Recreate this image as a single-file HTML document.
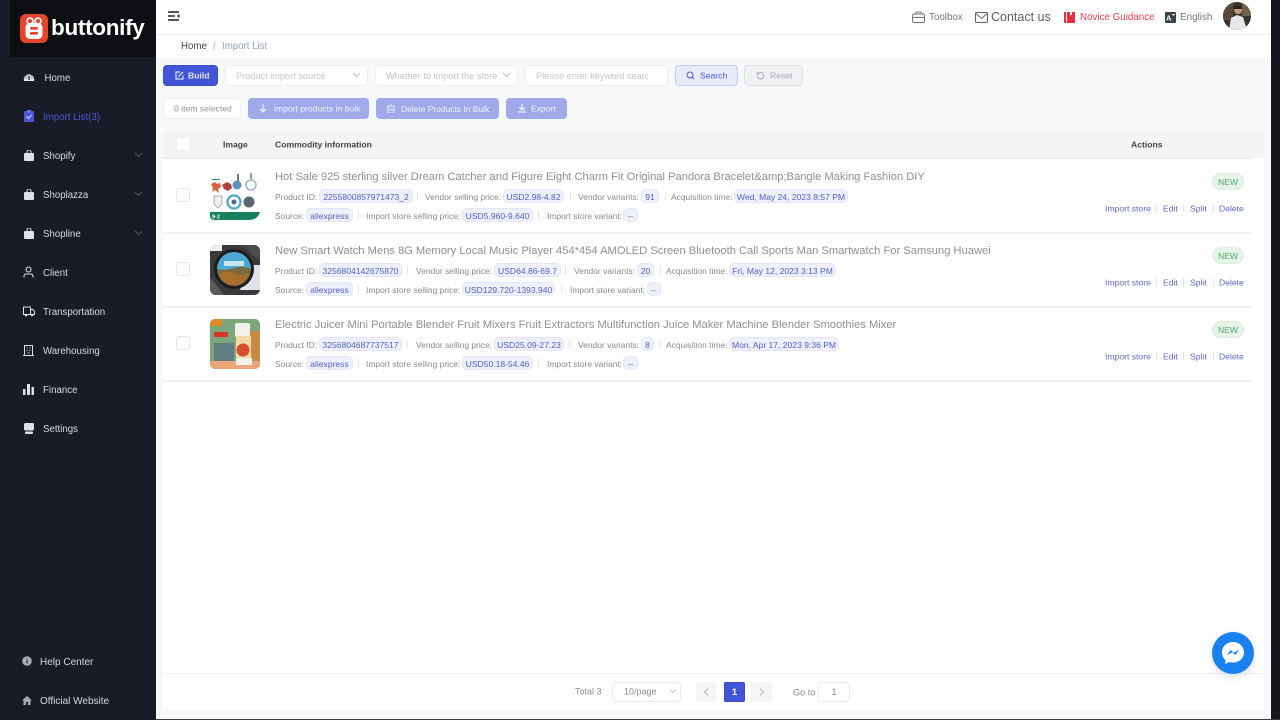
<!DOCTYPE html>
<html lang="en"><head><meta charset="utf-8"><title>Import List</title>
<style>
*{box-sizing:border-box;margin:0;padding:0}
html,body{width:1280px;height:720px;overflow:hidden;background:#f7f8f9;font-family:"Liberation Sans",Arial,sans-serif}
#r{position:relative;width:1280px;height:720px;overflow:hidden;filter:blur(.3px)}
.a{position:absolute}
.t{position:absolute;white-space:nowrap;transform:translateY(-50%);line-height:1}
.m2{font-size:8.45px;color:#8b8b8b;margin-top:.5px}
.tag{position:absolute;white-space:nowrap;height:14.5px;margin-top:-.5px;line-height:14px;font-size:8.55px;color:#5560cc;background:#eef0fc;border:1px solid #e3e6f9;border-radius:5px;text-align:center}
.sep{position:absolute;width:1px;height:8px;background:#e4e6ea}
.title{position:absolute;white-space:nowrap;font-size:11.17px;color:#909090;line-height:14px;margin-top:1px}
.box{position:absolute;width:14px;height:14px;background:#fff;border:1px solid #e4e6ea;border-radius:3px}
.new{position:absolute;left:1212px;width:32px;height:17px;line-height:16px;border-radius:9px;background:#e6f4e8;border:1px solid #deefe1;color:#4fa56a;font-size:8.6px;text-align:center}
.act{font-size:8.6px;color:#6069cf}
.btn{position:absolute;height:21px;border-radius:4px;color:#fff;font-size:8.6px;line-height:21px;white-space:nowrap}
.inp{position:absolute;top:65px;height:21px;background:#fff;border:1px solid #eceef0;border-radius:5px;font-size:9.2px;color:#c3c6cc;line-height:20px;padding-left:10px;white-space:nowrap;overflow:hidden}
.menu{font-size:9.7px;color:#d7d9de;margin-top:2px}
.menu.b{font-size:10px}
svg{position:absolute;display:block}
</style></head><body><div id="r">

<!-- sidebar -->
<div class="a" style="left:0;top:0;width:156px;height:720px;background:#191b26"></div>
<div class="a" style="left:10px;top:0;width:146px;height:57px;background:#0f0f13"></div>
<svg style="left:20px;top:14px" width="28" height="29" viewBox="0 0 28 29"><rect width="28" height="29" rx="6" fill="#e5452b"/><circle cx="10" cy="7" r="3" fill="none" stroke="#fff" stroke-width="1.6"/><circle cx="18" cy="7" r="3" fill="none" stroke="#fff" stroke-width="1.6"/><rect x="5.5" y="9" width="17" height="16" rx="4.5" fill="#fff"/><rect x="10" y="13" width="8" height="2.6" rx="1" fill="#e5452b"/><rect x="10" y="18" width="8" height="2.6" rx="1" fill="#e5452b"/></svg>
<div class="t" style="left:51px;top:28px;font-size:22.5px;font-weight:bold;color:#fff;letter-spacing:-.3px">buttonify</div>

<svg style="left:23px;top:72px" width="12" height="10" viewBox="0 0 12 10"><path d="M1 9A5.2 5.2 0 1 1 11 9Z" fill="#e4e6ea"/><path d="M6 8V4" stroke="#191b26" stroke-width="1.3"/><path d="M2.5 6h1M8.5 6h1M3.5 3.5l.6.6M8.5 3.5l-.6.6" stroke="#191b26"/></svg>
<div class="t menu" style="left:44.5px;top:77px">Home</div>
<svg style="left:24px;top:110px" width="10" height="12" viewBox="0 0 10 12"><rect y="1" width="10" height="11" rx="1" fill="#4a55d8"/><rect x="3" width="4" height="2.5" fill="#6a75e8"/><path d="M2.5 6.5l2 2 3-3.5" stroke="#d8dcfa" fill="none"/></svg>
<div class="t menu" style="left:43px;top:116px;color:#4a57d6">Import List(3)</div>

<svg style="left:24px;top:150px" width="10" height="11" viewBox="0 0 10 11"><rect y="3" width="10" height="8" rx="1" fill="#dfe1e6"/><path d="M3 4V2a2 2 0 0 1 4 0v2" fill="none" stroke="#dfe1e6"/></svg>
<div class="t menu" style="left:43px;top:155px">Shopify</div>
<svg style="left:134px;top:152px" width="9" height="6" viewBox="0 0 9 6"><path d="M1 1l3.5 3.5L8 1" fill="none" stroke="#50535f"/></svg>
<svg style="left:24px;top:189px" width="10" height="11" viewBox="0 0 10 11"><rect y="3" width="10" height="8" rx="1" fill="#dfe1e6"/><path d="M3 4V2a2 2 0 0 1 4 0v2" fill="none" stroke="#dfe1e6"/></svg>
<div class="t menu" style="left:43px;top:194px">Shoplazza</div>
<svg style="left:134px;top:191px" width="9" height="6" viewBox="0 0 9 6"><path d="M1 1l3.5 3.5L8 1" fill="none" stroke="#50535f"/></svg>
<svg style="left:24px;top:228px" width="10" height="11" viewBox="0 0 10 11"><rect y="3" width="10" height="8" rx="1" fill="#dfe1e6"/><path d="M3 4V2a2 2 0 0 1 4 0v2" fill="none" stroke="#dfe1e6"/></svg>
<div class="t menu" style="left:43px;top:233px">Shopline</div>
<svg style="left:134px;top:230px" width="9" height="6" viewBox="0 0 9 6"><path d="M1 1l3.5 3.5L8 1" fill="none" stroke="#50535f"/></svg>
<svg style="left:23px;top:266px" width="11" height="12" viewBox="0 0 11 12"><circle cx="5.5" cy="3.5" r="2.5" fill="none" stroke="#dfe1e6" stroke-width="1.1"/><path d="M1 11.5V10a2 2 0 0 1 2-2h5a2 2 0 0 1 2 2v1.5" fill="none" stroke="#dfe1e6" stroke-width="1.1"/></svg>
<div class="t menu" style="left:43px;top:272px">Client</div>
<svg style="left:23px;top:306px" width="12" height="11" viewBox="0 0 12 11"><path d="M.5 1h7v7.5H.5zM7.5 3.5H10l1.500 2v3h-4" fill="none" stroke="#dfe1e6"/><circle cx="3" cy="9" r="1.3" fill="#dfe1e6"/><circle cx="9" cy="9" r="1.3" fill="#dfe1e6"/></svg>
<div class="t menu" style="left:43px;top:311px">Transportation</div>
<svg style="left:23px;top:345px" width="11" height="11" viewBox="0 0 11 11"><path d="M1.5.5h8v10h-8zM0 10.5h11M3.5 3h1M6.5 3h1M3.5 5.5h1M6.5 5.5h1M4.5 8h2" fill="none" stroke="#dfe1e6"/></svg>
<div class="t menu" style="left:43px;top:350px">Warehousing</div>
<svg style="left:23px;top:384px" width="11" height="11" viewBox="0 0 11 11"><rect y="5" width="2.5" height="6" fill="#dfe1e6"/><rect x="4" width="3" height="11" fill="#dfe1e6"/><rect x="8.5" y="3" width="2.500" height="8" fill="#dfe1e6"/></svg>
<div class="t menu" style="left:43px;top:389px">Finance</div>
<svg style="left:24px;top:423px" width="10" height="11" viewBox="0 0 10 11"><rect width="10" height="7.5" rx="1.5" fill="#dfe1e6"/><rect x="1" y="8.5" width="8" height="2.5" rx="1" fill="#dfe1e6"/></svg>
<div class="t menu" style="left:43px;top:428px">Settings</div>

<svg style="left:22px;top:656px" width="10" height="10" viewBox="0 0 10 10"><circle cx="5" cy="5" r="4.800" fill="#a9acb3"/><path d="M5 4v3.500M5 2.200v1" stroke="#191b26" stroke-width="1.100"/></svg>
<div class="t menu b" style="left:40px;top:661px">Help Center</div>
<svg style="left:22px;top:696px" width="10" height="9" viewBox="0 0 10 9"><path d="M5 0L0 4.500h1.500V9h2.500V6h2v3h2.500V4.500H10z" fill="#a9acb3"/></svg>
<div class="t menu b" style="left:40px;top:700px">Official Website</div>

<!-- right frame -->
<div class="a" style="left:1271px;top:0;width:9px;height:720px;background:#17181f"></div>
<div class="a" style="left:156px;top:719px;width:1124px;height:1px;background:#3a3b40"></div>

<!-- header -->
<div class="a" style="left:156px;top:0;width:1115px;height:34px;background:#fff"></div>
<div class="a" style="left:156px;top:34px;width:1115px;height:1px;background:#eceef0"></div>
<div class="a" style="left:156px;top:35px;width:1115px;height:22px;background:#fff"></div>
<svg style="left:168px;top:11px" width="12" height="11" viewBox="0 0 12 11"><path d="M0 1h11M0 5h7M0 9h11" stroke="#222" stroke-width="1.4"/><path d="M11.500 3.200L8.800 5l2.700 1.800z" fill="#222"/></svg>
<svg style="left:912px;top:11px" width="13" height="12" viewBox="0 0 13 12"><rect x=".5" y="3" width="12" height="8.500" rx="1.500" fill="none" stroke="#777"/><path d="M4 3V1h5v2M.5 6.500h12" fill="none" stroke="#777"/></svg>
<div class="t" style="left:929px;top:18px;font-size:9.8px;color:#777">Toolbox</div>
<svg style="left:975px;top:12px" width="13" height="11" viewBox="0 0 13 11"><rect x=".5" y=".5" width="12" height="10" rx="1" fill="none" stroke="#666"/><path d="M1 1.500l5.500 5 5.500-5" fill="none" stroke="#666"/></svg>
<div class="t" style="left:991px;top:17px;font-size:12.5px;color:#606060">Contact us</div>
<svg style="left:1064px;top:12px" width="11" height="11" viewBox="0 0 11 11"><rect width="2" height="11" fill="#e8313f"/><path d="M3 0h3v3h2V0h3v11H3z" fill="#e8313f"/></svg>
<div class="t" style="left:1080px;top:18px;font-size:9.8px;color:#e9424f">Novice Guidance</div>
<svg style="left:1165px;top:12px" width="11" height="11" viewBox="0 0 11 11"><rect width="11" height="11" rx="1" fill="#3d4148"/><text x="1" y="8.500" font-size="7.500" font-weight="bold" fill="#fff" font-family="Liberation Sans">A</text><path d="M7 2.500h3M8.500 2v2" stroke="#fff" stroke-width=".7"/></svg>
<div class="t" style="left:1180px;top:18px;font-size:9.9px;color:#777">English</div>
<svg style="left:1223px;top:2px" width="28" height="28" viewBox="0 0 28 28"><defs><clipPath id="c"><circle cx="14" cy="14" r="14"/></clipPath></defs><g clip-path="url(#c)"><rect width="28" height="28" fill="#3a342e"/><rect width="10" height="18" fill="#57493a"/><rect x="19" y="0" width="9" height="14" fill="#6e5f4f"/><circle cx="15" cy="8" r="4" fill="#c99a7c"/><path d="M14 4a4 3 0 0 1 5 3l-8 0a4 3 0 0 1 3-3z" fill="#2a2018"/><path d="M6 28l2-12 6-3 6 2 4 13z" fill="#e6e6e8"/></g></svg>

<div class="t" style="left:181px;top:46.5px;font-size:9.7px;color:#444">Home</div>
<div class="t" style="left:213px;top:46.5px;font-size:9.7px;color:#aeb2b8">/</div>
<div class="t" style="left:222px;top:46.5px;font-size:9.7px;color:#93a6be">Import List</div>

<!-- filters -->
<div class="btn" style="left:163px;top:65px;width:55px;background:#4255d6;border:1px solid #3a4cc8"><span class="t" style="left:24px;top:10px;font-weight:bold;font-size:8.6px;color:#e3e6fb">Build</span><svg style="left:11px;top:5px" width="9" height="9" viewBox="0 0 9 9"><path d="M5 1H1v7h7V4.500" fill="none" stroke="#fff"/><path d="M3.500 5.500L8 1" stroke="#fff"/></svg></div>
<div class="inp" style="left:225px;width:143px">Product import source</div>
<svg style="left:352px;top:72px" width="9" height="6" viewBox="0 0 9 6"><path d="M1 1l3.500 3.500L8 1" fill="none" stroke="#b9bcc2"/></svg>
<div class="inp" style="left:375px;width:143px">Whether to import the store</div>
<svg style="left:502px;top:72px" width="9" height="6" viewBox="0 0 9 6"><path d="M1 1l3.500 3.500L8 1" fill="none" stroke="#b9bcc2"/></svg>
<div class="inp" style="left:525px;width:143px;"><span style="display:block;width:112px;overflow:hidden">Please enter keyword search</span></div>
<div class="btn" style="left:675px;top:65px;width:63px;background:#e8ebfb;border:1px solid #c3c9f3"><span class="t" style="left:24px;top:10px;color:#4a58d0">Search</span><svg style="left:10px;top:5px" width="9" height="9" viewBox="0 0 9 9"><circle cx="4" cy="4" r="3" fill="none" stroke="#4a58d0"/><path d="M6.300 6.300L8 8" stroke="#4a58d0"/></svg></div>
<div class="btn" style="left:744px;top:65px;width:59px;background:#f0f1f2;border:1px solid #dfe1e4"><span class="t" style="left:25px;top:10px;color:#a8abb0">Reset</span><svg style="left:11px;top:5px" width="9" height="9" viewBox="0 0 9 9"><path d="M2 2.500A3.300 3.300 0 1 1 1.200 5" fill="none" stroke="#a8abb0"/><path d="M1 1v2.200h2.200" fill="none" stroke="#a8abb0"/></svg></div>

<div class="a" style="left:163px;top:98px;width:78px;height:21px;background:#fff;border:1px solid #eceef0;border-radius:5px"></div>
<div class="t m2" style="left:174px;top:108.5px;color:#909399;font-size:8.6px">0 item selected</div>
<div class="btn" style="left:248px;top:98px;width:121px;background:#a1a9ea"><svg style="left:11px;top:6px" width="8" height="9" viewBox="0 0 8 9"><path d="M4 0v8M1 5l3 3 3-3" fill="none" stroke="#fff"/></svg><span class="t" style="left:26px;top:10.5px;color:#f3f4fd">import products in bulk</span></div>
<div class="btn" style="left:376px;top:98px;width:123px;background:#a1a9ea"><svg style="left:11px;top:6px" width="8" height="9" viewBox="0 0 8 9"><path d="M1 2h6v7H1zM0 2h8M3 0h2M3 4v3M5 4v3" fill="none" stroke="#fff" stroke-width=".8"/></svg><span class="t" style="left:25px;top:10.5px;color:#f3f4fd;font-size:8.45px">Delete Products In Bulk</span></div>
<div class="btn" style="left:506px;top:98px;width:61px;background:#a1a9ea"><svg style="left:12px;top:6px" width="8" height="9" viewBox="0 0 8 9"><path d="M4 0v5.500M1.500 3.500L4 6l2.500-2.500M0 8h8" fill="none" stroke="#fff"/></svg><span class="t" style="left:25px;top:10.5px;color:#f3f4fd">Export</span></div>

<!-- table -->
<div class="a" style="left:163px;top:130px;width:1101px;height:580px;background:#fff"></div>
<div class="a" style="left:163px;top:130px;width:1101px;height:28px;background:#f3f4f6;border-radius:4px 4px 0 0"></div>
<div class="a" style="left:163px;top:158px;width:1089px;height:1px;background:#e9ebee"></div>
<div class="box" style="left:176px;top:137px;border-color:#eceef0"></div>
<div class="t" style="left:223px;top:144.5px;font-size:8.6px;font-weight:bold;color:#444">Image</div>
<div class="t" style="left:275px;top:144.5px;font-size:8.6px;font-weight:bold;color:#444">Commodity information</div>
<div class="t" style="left:1131px;top:144.5px;font-size:8.6px;font-weight:bold;color:#444">Actions</div>

<div class="a" style="left:163px;top:232px;width:1089px;height:2px;background:#f1f2f4"></div>
<div class="a" style="left:163px;top:306px;width:1089px;height:2px;background:#f1f2f4"></div>
<div class="a" style="left:163px;top:380px;width:1089px;height:2px;background:#f1f2f4"></div>

<!-- row 1 -->
<div class="box" style="left:176px;top:188px"></div>
<svg style="left:210px;top:171px" width="50" height="50" viewBox="0 0 50 50"><rect width="50" height="50" fill="#fff"/><path d="M2 8h8v1H2z" fill="#3b8e6b"/><path d="M1 13l4-2 2 2 3-1 1 4-3 2 1 4-4-3-3 2 1-4z" fill="#d9603c"/><path d="M12 14l5-3 4 2 1 4-4 3-4-2z" fill="#b43f3a"/><path d="M27 3h2v7h-2z" fill="#777"/><circle cx="27" cy="14" r="4.500" fill="#5a93c4"/><path d="M40 2h2v6h-2z" fill="#999"/><circle cx="41" cy="14" r="5" fill="#fff" stroke="#a8b0b8" stroke-width="1.500"/><path d="M4 25h8v8l-4 4-4-4z" fill="#eee" stroke="#999" stroke-width=".8"/><circle cx="24" cy="31" r="6.500" fill="#fff" stroke="#4ba4cc" stroke-width="2.200"/><circle cx="24" cy="31" r="2.500" fill="#3e6f8f"/><circle cx="39" cy="31" r="5.500" fill="#5b6672"/><path d="M0 41h50q-2 8-12 8H5q-5 0-5-4z" fill="#188060"/><text x="2" y="47.500" font-size="5.500" font-weight="bold" fill="#fff" font-family="Liberation Sans">9·2</text></svg>
<div class="title" style="left:275px;top:169px">Hot Sale 925 sterling silver Dream Catcher and Figure Eight Charm Fit Original Pandora Bracelet&amp;amp;Bangle Making Fashion DIY</div>
<div class="t m2" style="left:275px;top:196px">Product ID:</div>
<div class="tag" style="left:319px;top:189px;width:94px">2255800857971473_2</div>
<div class="sep" style="left:417px;top:192px"></div>
<div class="t m2" style="left:425px;top:196px">Vendor selling price:</div>
<div class="tag" style="left:503px;top:189px;width:61px">USD2.98-4.82</div>
<div class="sep" style="left:570px;top:192px"></div>
<div class="t m2" style="left:578px;top:196px">Vendor variants:</div>
<div class="tag" style="left:641px;top:189px;width:18px">91</div>
<div class="sep" style="left:665px;top:192px"></div>
<div class="t m2" style="left:671px;top:196px">Acquisition time:</div>
<div class="tag" style="left:734px;top:189px;width:114px">Wed, May 24, 2023 8:57 PM</div>
<div class="t m2" style="left:275px;top:215.5px">Source:</div>
<div class="tag" style="left:306px;top:208px;width:47px">aliexpress</div>
<div class="sep" style="left:358px;top:211px"></div>
<div class="t m2" style="left:366px;top:215.5px">Import store selling price:</div>
<div class="tag" style="left:462px;top:208px;width:71px">USD5.960-9.640</div>
<div class="sep" style="left:538px;top:211px"></div>
<div class="t m2" style="left:547px;top:215.5px">Import store variant:</div>
<div class="tag" style="left:623px;top:208px;width:15px">--</div>
<div class="new" style="top:173px">NEW</div>
<div class="t act" style="left:1105px;top:208.5px">Import store</div><div class="sep" style="left:1156px;top:204px"></div>
<div class="t act" style="left:1163px;top:208.5px">Edit</div><div class="sep" style="left:1183px;top:204px"></div>
<div class="t act" style="left:1190px;top:208.5px">Split</div><div class="sep" style="left:1213px;top:204px"></div>
<div class="t act" style="left:1219px;top:208.5px">Delete</div>

<!-- row 2 -->
<div class="box" style="left:176px;top:262px"></div>
<svg style="left:210px;top:245px" width="50" height="50" viewBox="0 0 50 50"><defs><clipPath id="c2"><rect width="50" height="50" rx="6"/></clipPath></defs><g clip-path="url(#c2)"><rect width="50" height="50" fill="#3a3a3c"/><path d="M0 0h12v6H0z" fill="#eee"/><path d="M32 0h18v16z" fill="#4a4a4d"/><path d="M38 20h12v25H30z" fill="#dde3ea"/><path d="M0 32l14 18H0z" fill="#5c5c5e"/><circle cx="24" cy="24" r="20" fill="#1c1c1e"/><circle cx="24" cy="24" r="17" fill="#7d6a3f"/><path d="M7 24A17 17 0 0 1 41 24q-8-4-17-1t-17 1z" fill="#4aa8d4"/><path d="M14 16h20v5H14z" fill="#c8e6f2"/><path d="M9 30q8-6 15-2t15 0q-5 12-15 12T9 30z" fill="#a86f2c"/></g></svg>
<div class="title" style="left:275px;top:243px">New Smart Watch Mens 8G Memory Local Music Player 454*454 AMOLED Screen Bluetooth Call Sports Man Smartwatch For Samsung Huawei</div>
<div class="t m2" style="left:275px;top:270px">Product ID:</div>
<div class="tag" style="left:319px;top:263px;width:83px">3256804142675870</div>
<div class="sep" style="left:407px;top:266px"></div>
<div class="t m2" style="left:416px;top:270px">Vendor selling price:</div>
<div class="tag" style="left:494px;top:263px;width:67px">USD64.86-69.7</div>
<div class="sep" style="left:565px;top:266px"></div>
<div class="t m2" style="left:574px;top:270px">Vendor variants:</div>
<div class="tag" style="left:637px;top:263px;width:17px">20</div>
<div class="sep" style="left:660px;top:266px"></div>
<div class="t m2" style="left:666px;top:270px">Acquisition time:</div>
<div class="tag" style="left:729px;top:263px;width:107px">Fri, May 12, 2023 3:13 PM</div>
<div class="t m2" style="left:275px;top:289.5px">Source:</div>
<div class="tag" style="left:306px;top:282px;width:47px">aliexpress</div>
<div class="sep" style="left:358px;top:285px"></div>
<div class="t m2" style="left:366px;top:289.5px">Import store selling price:</div>
<div class="tag" style="left:462px;top:282px;width:93px">USD129.720-1393.940</div>
<div class="sep" style="left:561px;top:285px"></div>
<div class="t m2" style="left:570px;top:289.5px">Import store variant:</div>
<div class="tag" style="left:647px;top:282px;width:14px">--</div>
<div class="new" style="top:247px">NEW</div>
<div class="t act" style="left:1105px;top:282.5px">Import store</div><div class="sep" style="left:1156px;top:278px"></div>
<div class="t act" style="left:1163px;top:282.5px">Edit</div><div class="sep" style="left:1183px;top:278px"></div>
<div class="t act" style="left:1190px;top:282.5px">Split</div><div class="sep" style="left:1213px;top:278px"></div>
<div class="t act" style="left:1219px;top:282.5px">Delete</div>

<!-- row 3 -->
<div class="box" style="left:176px;top:336px"></div>
<svg style="left:210px;top:319px" width="50" height="50" viewBox="0 0 50 50"><defs><clipPath id="c3"><rect width="50" height="50" rx="5"/></clipPath></defs><g clip-path="url(#c3)"><rect width="50" height="50" fill="#7ea67d"/><path d="M38 12h12v30H38z" fill="#c88a45"/><path d="M0 0h12v7H0z" fill="#e08a2a"/><rect x="4" y="13" width="14" height="5" fill="#d9322c"/><rect x="4" y="24" width="20" height="18" fill="#5f7d82"/><path d="M0 42h50v8H0z" fill="#e9a77a"/><rect x="25" y="4" width="15" height="14" rx="2" fill="#f2f0ea"/><rect x="26" y="17" width="15" height="22" fill="#f3d9a6"/><circle cx="33" cy="31" r="6.500" fill="#d8502b"/><rect x="26" y="39" width="16" height="7" fill="#f4f2ee"/></g></svg>
<div class="title" style="left:275px;top:317px">Electric Juicer Mini Portable Blender Fruit Mixers Fruit Extractors Multifunction Juice Maker Machine Blender Smoothies Mixer</div>
<div class="t m2" style="left:275px;top:344px">Product ID:</div>
<div class="tag" style="left:319px;top:337px;width:83px">3256804687737517</div>
<div class="sep" style="left:407px;top:340px"></div>
<div class="t m2" style="left:416px;top:344px">Vendor selling price:</div>
<div class="tag" style="left:494px;top:337px;width:70px">USD25.09-27.23</div>
<div class="sep" style="left:569px;top:340px"></div>
<div class="t m2" style="left:578px;top:344px">Vendor variants:</div>
<div class="tag" style="left:641px;top:337px;width:13px">8</div>
<div class="sep" style="left:660px;top:340px"></div>
<div class="t m2" style="left:666px;top:344px">Acquisition time:</div>
<div class="tag" style="left:729px;top:337px;width:110px">Mon, Apr 17, 2023 9:36 PM</div>
<div class="t m2" style="left:275px;top:363.5px">Source:</div>
<div class="tag" style="left:306px;top:356px;width:47px">aliexpress</div>
<div class="sep" style="left:358px;top:359px"></div>
<div class="t m2" style="left:366px;top:363.5px">Import store selling price:</div>
<div class="tag" style="left:462px;top:356px;width:71px">USD50.18-54.46</div>
<div class="sep" style="left:538px;top:359px"></div>
<div class="t m2" style="left:547px;top:363.5px">Import store variant:</div>
<div class="tag" style="left:623px;top:356px;width:15px">--</div>
<div class="new" style="top:321px">NEW</div>
<div class="t act" style="left:1105px;top:356.5px">Import store</div><div class="sep" style="left:1156px;top:352px"></div>
<div class="t act" style="left:1163px;top:356.5px">Edit</div><div class="sep" style="left:1183px;top:352px"></div>
<div class="t act" style="left:1190px;top:356.5px">Split</div><div class="sep" style="left:1213px;top:352px"></div>
<div class="t act" style="left:1219px;top:356.5px">Delete</div>

<!-- pagination -->
<div class="a" style="left:163px;top:673px;width:1101px;height:1px;background:#eef0f2"></div>
<div class="t" style="left:575px;top:692px;font-size:9px;color:#8b8b8b">Total 3</div>
<div class="a" style="left:612px;top:682px;width:69px;height:20px;background:#fff;border:1px solid #e8eaed;border-radius:5px"></div>
<div class="t" style="left:624px;top:692px;font-size:9px;color:#8b8b8b">10/page</div>
<svg style="left:669px;top:689px" width="8" height="5" viewBox="0 0 8 5"><path d="M1 .5l3 3 3-3" fill="none" stroke="#c3c6cc"/></svg>
<div class="a" style="left:696px;top:682px;width:20px;height:20px;background:#f5f5f5;border-radius:2px"></div>
<svg style="left:703px;top:688px" width="6" height="8" viewBox="0 0 6 8"><path d="M5 .5L1.500 4 5 7.500" fill="none" stroke="#b5b8bd"/></svg>
<div class="a" style="left:724px;top:682px;width:21px;height:20px;background:#4255d6;border:1px solid #3a4cc8;border-radius:2px;color:#fff;font-size:9.5px;font-weight:bold;text-align:center;line-height:19px">1</div>
<div class="a" style="left:751px;top:682px;width:21px;height:20px;background:#f5f5f5;border-radius:2px"></div>
<svg style="left:759px;top:688px" width="6" height="8" viewBox="0 0 6 8"><path d="M1 .5L4.500 4 1 7.500" fill="none" stroke="#b5b8bd"/></svg>
<div class="t" style="left:793px;top:692.5px;font-size:9.2px;color:#8b8b8b">Go to</div>
<div class="a" style="left:818px;top:682px;width:32px;height:20px;background:#fff;border:1px solid #e8eaed;border-radius:5px;font-size:9px;color:#8b8b8b;text-align:center;line-height:18px">1</div>

<!-- messenger -->
<div class="a" style="left:1212px;top:632px;width:42px;height:42px;border-radius:50%;background:#1a82f0;box-shadow:0 3px 8px rgba(60,90,140,.18)"></div>
<svg style="left:1221px;top:641px" width="24" height="24" viewBox="0 0 24 24"><path d="M12 1C5.800 1 1 5.500 1 11.400c0 3.100 1.300 5.800 3.400 7.600V23l3.600-2c1.200.4 2.600.6 4 .6 6.200 0 11-4.400 11-10.200S18.200 1 12 1z" fill="#fff"/><path d="M5.500 14.500L9.800 9l3 2.700L18.500 8.500l-4.300 5.500-3-2.700z" fill="#1a82f0"/></svg>
</div></body></html>
